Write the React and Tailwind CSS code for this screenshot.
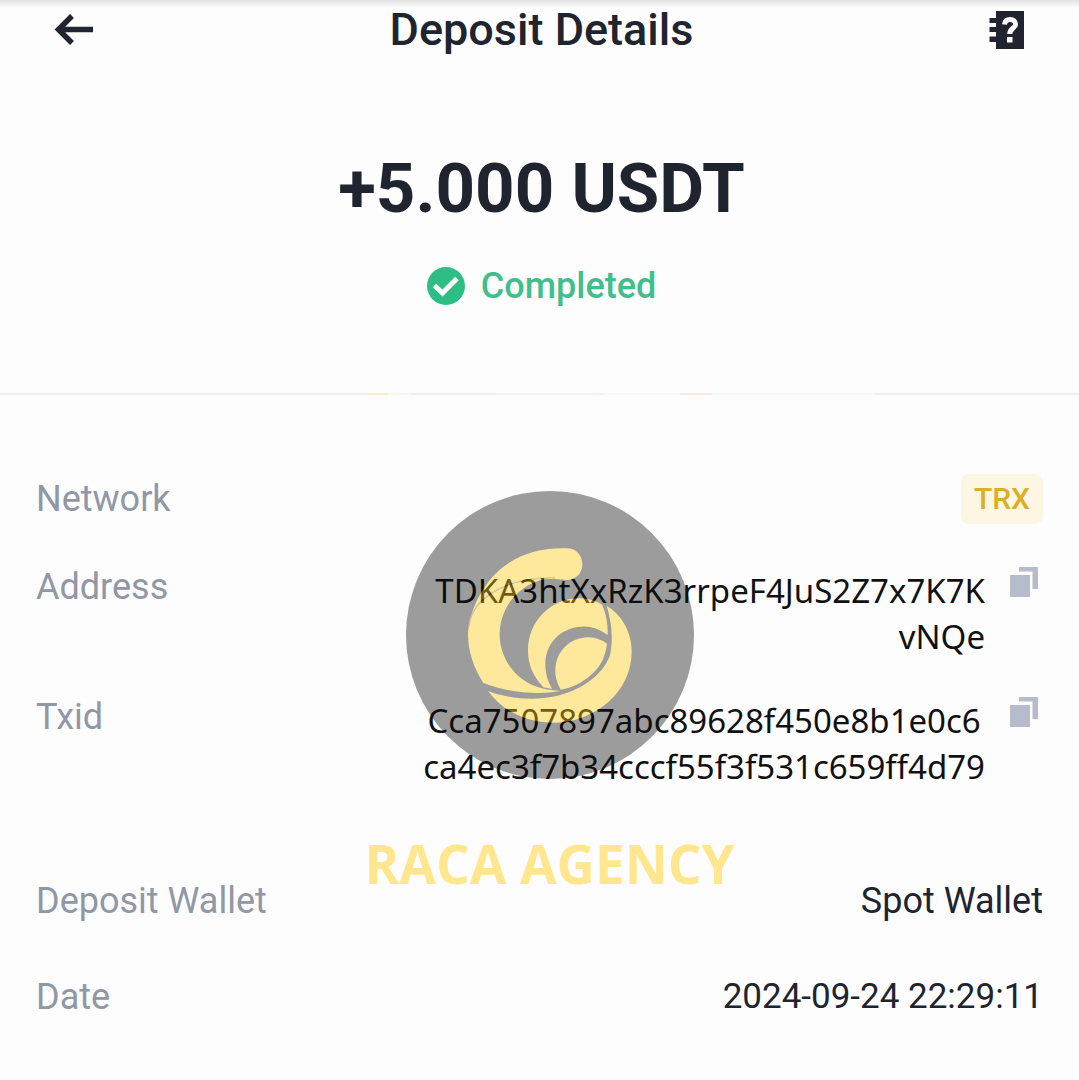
function BackIcon() {
  return (
    <svg viewBox="0 0 40 32" className="h-8 w-10" fill="none" stroke="#20242f" strokeWidth="5.500">
      <path d="M39 15.500H5M18 2L4.500 15.500L18 29" />
    </svg>
  );
}

function HelpIcon() {
  return (
    <svg viewBox="0 0 36 40" className="h-10 w-9">
      <path fill="#20242f" d="M7 1h28v38H7V32H.5V26.500H7V22H.5V17H7V13H.5V8H7z" />
      <path d="M15.500 14.500C16 11 18.500 9.500 21 9.500c3.500 0 5.500 2 5.500 4.700 0 4.300-5.800 4-5.800 9.800" fill="none" stroke="#fdfdfd" strokeWidth="5" />
      <path fill="#fdfdfd" d="M18 27h5.500v5.500H18z" />
    </svg>
  );
}

function CheckIcon() {
  return (
    <svg viewBox="0 0 38 38" className="size-[38px]">
      <circle cx="19" cy="19" r="19" fill="#2ebd85" />
      <path d="M7.500 18.500L15.500 26L30 11.500" fill="none" stroke="#fdfdfd" strokeWidth="5" />
    </svg>
  );
}

function CopyButton({ label }) {
  return (
    <button type="button" aria-label={label} className="mr-1 ml-6 mt-0.5 h-8 w-[30px] shrink-0">
      <svg viewBox="0 0 30 32" className="h-8 w-[30px]" fill="#b6bccb">
        <path d="M1 9h20v22H1zM10 1h19v22h-5.500V5.500H10z" />
      </svg>
    </button>
  );
}

function Emblem() {
  return (
    <svg viewBox="18 32 864 864" className="size-72 opacity-40">
      <circle cx="450" cy="464" r="432" fill="#0c0c0c" />
      <g fill="#ffc90a">
        <path d="M500 204C530 204 547 226 547 252C547 280 527 300 497 299C474 297 455 295 432 297C352 315 299 385 299 462C299 532 345 604 425 624C442 629 463 630 482 632C405 645 320 635 250 608C220 560 205 515 204 465C206 400 240 325 292 275C348 222 420 202 500 204Z" />
        <path d="M430 621C400 588 384 555 384 510C384 425 450 357 532 354C561 353 586 360 606 373C620 403 624 435 623 464C596 445 570 437 545 439C480 442 437 490 436 550C436 580 444 604 457 626Z" />
        <path d="M482 628C470 608 465 588 466 567C468 512 512 470 566 471C588 472 606 479 621 490C616 526 605 555 577 580C548 607 516 622 482 628Z" />
        <path d="M620 377C667 405 695 456 695 514C695 635 585 728 455 727C375 726 308 691 264 632C330 657 405 661 465 648C540 632 607 587 630 525C640 474 635 424 620 377Z" />
      </g>
      <path d="M466 293C340 290 218 340 207 438" fill="none" stroke="#8a6a14" strokeWidth="4" />
    </svg>
  );
}

function Divider() {
  return (
    <div className="flex h-0.5 bg-[#efefef]">
      <div className="w-[34%]" />
      <div className="w-[2%] bg-[#faf0b4]" />
      <div className="w-[2%] bg-[#f8f6e4]" />
      <div className="w-[8%]" />
      <div className="w-[10%] bg-[#faf0ea]" />
      <div className="w-[7%] bg-[#f8f8f8]" />
      <div className="w-[3%] bg-[#fae8df]" />
      <div className="w-[15%] bg-[#f6f6f6]" />
    </div>
  );
}

const label = "text-[#9097a6]";
const value = "text-[#20242f]";

export default function App() {
  return (
    <main className="relative min-h-screen bg-[#fdfdfd] pb-10 font-['Roboto',sans-serif] text-[36px] leading-[46px]">
      <div className="h-2 bg-linear-to-b from-[#e2e2e2] to-[#fdfdfd]" />
      <header className="flex h-11 items-center justify-between px-[54px]">
        <button type="button" aria-label="Back"><BackIcon /></button>
        <h1 className="text-[45px] font-medium text-[#20242f]">Deposit Details</h1>
        <button type="button" aria-label="Help"><HelpIcon /></button>
      </header>

      <section className="flex flex-col items-center pt-[97px] pb-[84px] pl-1">
        <p className="text-[69px] leading-[80px] font-bold text-[#20242f]">+5.000 USDT</p>
        <p className="mt-[34px] flex items-center gap-4 font-medium text-[#3fbf8c]">
          <CheckIcon />
          Completed
        </p>
      </section>
      <Divider />

      <dl className="px-9 pt-[79px]">
        <div className="flex items-center justify-between">
          <dt className={label}>Network</dt>
          <dd className="rounded-lg bg-[#fcf6e3] px-[13px] py-[2px] text-[30px] font-medium text-[#dcae2b]">TRX</dd>
        </div>
        <div className="mt-10 flex items-start">
          <dt className={label}>Address</dt>
          <dd className="ml-auto flex items-start">
            <span className="mt-1 text-right font-['Noto_Sans',sans-serif] text-[33px] text-[#111]">
              TDKA3htXxRzK3rrpeF4JuS2Z7x7K7K<br />vNQe
            </span>
            <CopyButton label="Copy address" />
          </dd>
        </div>
        <div className="mt-[34px] flex items-start">
          <dt className={label}>Txid</dt>
          <dd className="ml-auto flex items-start">
            <span className="mt-1 text-center font-['Noto_Sans',sans-serif] text-[33px] text-[#111]">
              Cca7507897abc89628f450e8b1e0c6<br />ca4ec3f7b34cccf55f3f531c659ff4d79
            </span>
            <CopyButton label="Copy transaction ID" />
          </dd>
        </div>
        <div className="mt-[88px] flex items-center justify-between">
          <dt className={label}>Deposit Wallet</dt>
          <dd className={value}>Spot Wallet</dd>
        </div>
        <div className="mt-[50px] flex items-center justify-between">
          <dt className={label}>Date</dt>
          <dd className="text-[35px] text-[#20242f]">2024-09-24 22:29:11</dd>
        </div>
      </dl>

      <div className="pointer-events-none absolute inset-x-0 top-[491px] flex flex-col items-center pl-5">
        <Emblem />
        <p className="mt-[55px] font-['Open_Sans',sans-serif] text-[53px] leading-[60px] font-bold text-[#ffe68f]">RACA AGENCY</p>
      </div>
    </main>
  );
}
